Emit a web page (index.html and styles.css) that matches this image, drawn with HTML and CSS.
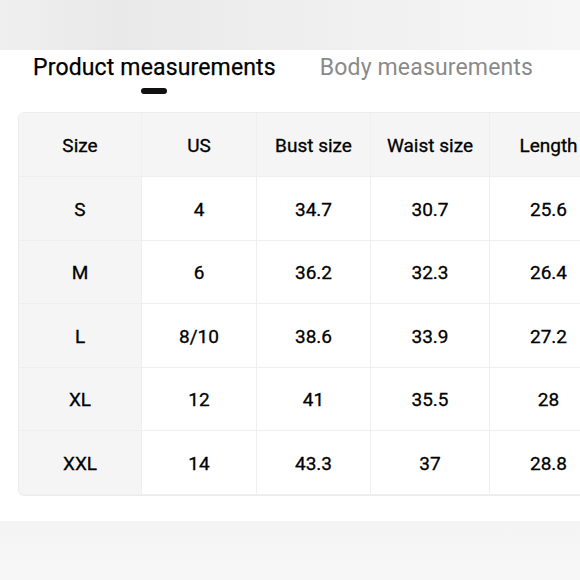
FILE: index.html
```html
<!DOCTYPE html>
<html>
<head>
<meta charset="utf-8">
<link rel="stylesheet" href="styles.css">
</head>
<body>
<div class="topband"></div>
<main class="panel">
  <nav class="tabs">
    <div class="tab active">Product measurements<span class="indicator"></span></div>
    <div class="tab">Body measurements</div>
  </nav>
  <div class="tablewrap">
    <table class="sizes">
      <thead>
        <tr><th>Size</th><th>US</th><th>Bust size</th><th>Waist size</th><th>Length</th></tr>
      </thead>
      <tbody>
        <tr><th>S</th><td>4</td><td>34.7</td><td>30.7</td><td>25.6</td></tr>
        <tr><th>M</th><td>6</td><td>36.2</td><td>32.3</td><td>26.4</td></tr>
        <tr><th>L</th><td>8/10</td><td>38.6</td><td>33.9</td><td>27.2</td></tr>
        <tr><th>XL</th><td>12</td><td>41</td><td>35.5</td><td>28</td></tr>
        <tr><th>XXL</th><td>14</td><td>43.3</td><td>37</td><td>28.8</td></tr>
      </tbody>
    </table>
  </div>
</main>
<div class="bottomband"></div>
</body>
</html>
```
FILE: styles.css
```css
html, body { margin: 0; padding: 0; }
body {
  width: 580px;
  height: 580px;
  overflow: hidden;
  background: #fff;
  font-family: Roboto, "Liberation Sans", sans-serif;
  color: #000;
}
.topband {
  height: 50px;
  background: linear-gradient(90deg, #efefef 0%, #e9e9e9 20%, #f0f0f0 60%, #f6f6f6 100%);
}
.panel {
  height: 471px;
  background: #fff;
  overflow: hidden;
}
.tabs {
  display: flex;
  gap: 44px;
  padding: 3px 0 0 33px;
  height: 60px;
  box-sizing: border-box;
}
.tab {
  position: relative;
  font-size: 23px;
  letter-spacing: 0.15px;
  line-height: 30px;
  color: #8a8a8a;
  white-space: nowrap;
}
.tab.active { color: #000; -webkit-text-stroke: 0.25px #000; }
.indicator {
  position: absolute;
  left: 108px;
  top: 35px;
  width: 26px;
  height: 6px;
  border-radius: 3px;
  background: #111;
}
.tablewrap {
  padding: 3px 0 0 19px;
}
.sizes {
  border-collapse: separate;
  border-spacing: 0;
  table-layout: fixed;
  width: 589px;
  font-size: 19px;
  border-radius: 5px 0 0 5px;
  box-shadow: 0 0 0 1px #ececec;
}
.sizes th, .sizes td {
  box-sizing: border-box;
  height: 63.5px;
  text-align: center;
  vertical-align: middle;
  font-weight: 400;
  -webkit-text-stroke: 0.3px #000;
  padding: 2px 0 0;
  border-right: 1px solid #efefef;
  border-bottom: 1px solid #efefef;
}
.sizes thead th { height: 64px; }
.sizes tr > :nth-child(1) { width: 123px; }
.sizes tr > :nth-child(2) { width: 115px; }
.sizes tr > :nth-child(3) { width: 114px; }
.sizes tr > :nth-child(4) { width: 119px; }
.sizes tr > :nth-child(5) { width: 118px; }
.sizes thead th { background: #f5f5f5; }
.sizes tbody th { background: #f5f5f5; }
.sizes thead tr th:first-child { border-top-left-radius: 5px; }
.sizes tbody tr:last-child th { border-bottom-left-radius: 5px; }
.bottomband {
  height: 59px;
  background: linear-gradient(180deg, #f4f4f4 0%, #f7f7f7 100%);
}
```
